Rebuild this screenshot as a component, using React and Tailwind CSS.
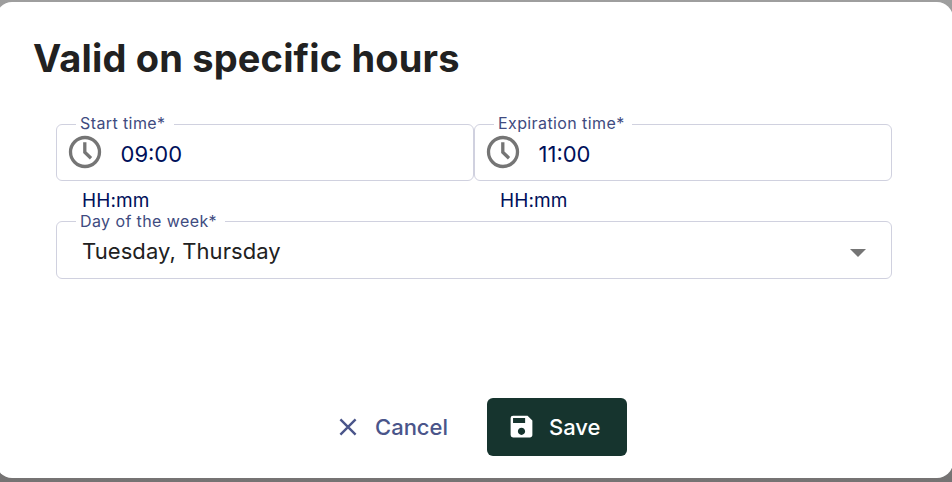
import React from 'react';
import { MdSave } from 'react-icons/md';

const ClockIcon = () => (
  <svg className="h-[36px] w-[36px] shrink-0 text-[#757575]" viewBox="0 0 36 36" fill="none" stroke="currentColor" strokeWidth="3.3">
    <circle cx="18" cy="18" r="14.5" />
    <path d="M17.8 8.2v10l6.2 6" />
  </svg>
);

const Field = ({ label, labelClass, className, children }) => (
  <fieldset className={`min-w-0 rounded-[6px] border border-[#d0d1df] pl-[19px] ${className}`}>
    <legend className={`whitespace-nowrap px-[4px] text-[16px] leading-[18px] tracking-[0.4px] text-[#404b80] ${labelClass}`}>
      {label}
    </legend>
    {children}
  </fieldset>
);

const TimeField = ({ label, labelClass, value }) => (
  <div className="w-[418px]">
    <Field label={label} labelClass={`h-[20px] ${labelClass}`} className="h-[67px]">
      <div className="-ml-[9px] flex h-[36px] items-center gap-[17.5px]">
        <ClockIcon />
        <span className="pt-[4px] text-[22px] text-[#00105a]">{value}</span>
      </div>
    </Field>
    <p className="pl-[26px] pt-[8px] text-[19px] leading-[24px] tracking-[0.1px] text-[#00105a]">HH:mm</p>
  </div>
);

function App() {
  return (
    <div className="h-[482px] w-[952px] overflow-hidden bg-linear-to-b from-[#9e9e9e] to-[#757373] pt-[2px] font-[Inter,sans-serif]">
      <div className="-ml-[4px] flex h-[476px] w-[957px] flex-col rounded-[16px] bg-white pl-[4px]">
        <h1 className="px-[33px] pt-[32px] text-[38px] font-bold leading-[48px] tracking-[0.17px] text-[#212121]">
          Valid on specific hours
        </h1>
        <div className="px-[56px] pt-[32px]">
          <div className="flex">
            <TimeField label="Start time*" labelClass="w-[98px]" value="09:00" />
            <TimeField label="Expiration time*" labelClass="w-[138px]" value="11:00" />
          </div>
          <div className="-mt-[1px]">
            <Field label="Day of the week*" labelClass="h-[18px] w-[149px]" className="h-[67px] w-[836px]">
              <div className="flex h-[42px] items-center justify-between pl-[6px] pr-[25px]">
                <span className="text-[22px] tracking-[0.08px] text-[#212121]">Tuesday, Thursday</span>
                <svg className="mt-[3px] h-[8px] w-[16px] text-[#757575]" viewBox="0 0 16 8" fill="currentColor">
                  <path d="M0 0h16L8 8z" />
                </svg>
              </div>
            </Field>
          </div>
        </div>
        <div className="mb-[22px] mt-auto flex gap-[38px] pl-[339px] text-[22px] font-medium">
          <button className="flex w-[110px] items-center gap-[18px] text-[#4a558a]">
            <svg className="h-[18px] w-[18px]" viewBox="0 0 18 18" stroke="currentColor" strokeWidth="2.4">
              <path d="M1.4 1.4l15.2 15.2M16.6 1.4L1.4 16.6" />
            </svg>
            Cancel
          </button>
          <button className="flex h-[58px] w-[140px] items-center gap-[13px] rounded-[6px] bg-[#16342e] pl-[20px] text-white">
            <MdSave size={29} className="-mt-[1px]" />
            Save
          </button>
        </div>
      </div>
    </div>
  );
}

export default App;
